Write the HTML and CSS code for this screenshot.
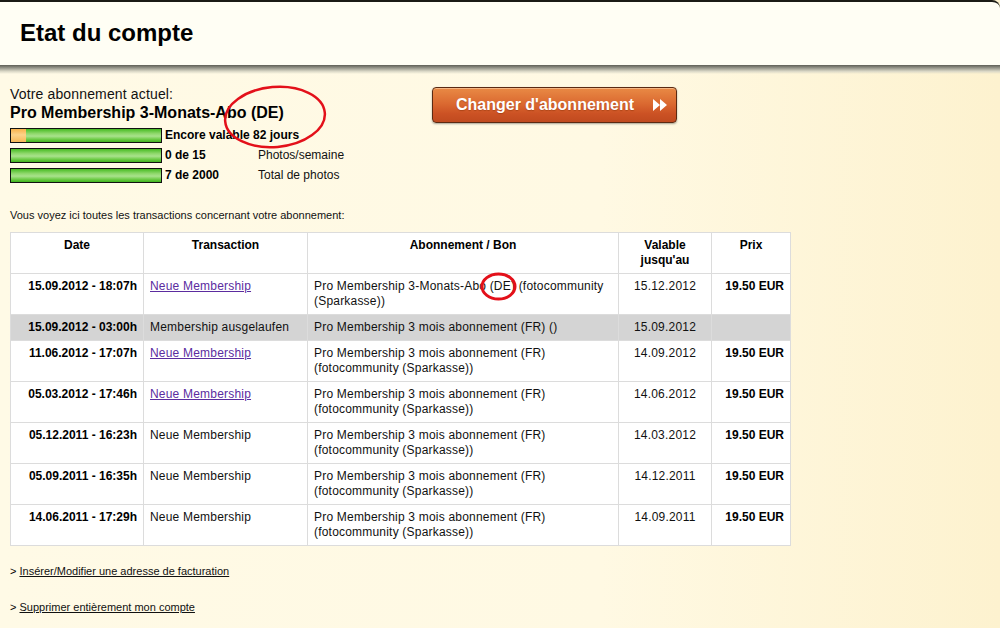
FILE: index.html
```html
<!DOCTYPE html>
<html lang="fr">
<head>
<meta charset="utf-8">
<title>Etat du compte</title>
<link rel="stylesheet" href="styles.css">
</head>
<body>
<div class="page">
  <header class="header"><h1>Etat du compte</h1></header>
  <div class="header-shadow"></div>

  <main class="content">
    <section class="top">
      <div class="summary">
        <div class="current-label">Votre abonnement actuel:</div>
        <div class="current-name">Pro Membership 3-Monats-Abo (DE)</div>
        <div class="meter-row">
          <div class="bar"><div class="bar-used" style="width:15px"></div></div>
          <span class="meter-value">Encore valable 82 jours</span>
        </div>
        <div class="meter-row">
          <div class="bar"></div>
          <span class="meter-value">0 de 15</span>
          <span class="meter-label">Photos/semaine</span>
        </div>
        <div class="meter-row">
          <div class="bar"></div>
          <span class="meter-value">7 de 2000</span>
          <span class="meter-label">Total de photos</span>
        </div>
      </div>
      <a class="change-btn" href="#">
        <span>Changer d'abonnement</span>
        <svg class="ff" width="14" height="12" viewBox="0 0 14 12"><path d="M0 0 L7 6 L0 12 Z M7 0 L14 6 L7 12 Z" fill="#fff"/></svg>
      </a>
    </section>

    <p class="intro">Vous voyez ici toutes les transactions concernant votre abonnement:</p>

    <table class="tx">
      <colgroup>
        <col class="c-date"><col class="c-type"><col class="c-sub"><col class="c-valid"><col class="c-price">
      </colgroup>
      <thead>
        <tr><th>Date</th><th>Transaction</th><th>Abonnement / Bon</th><th>Valable jusqu'au</th><th>Prix</th></tr>
      </thead>
      <tbody>
        <tr><td class="d">15.09.2012 - 18:07h</td><td><a href="#">Neue Membership</a></td><td>Pro Membership 3-Monats-Abo (DE) (fotocommunity (Sparkasse))</td><td class="v">15.12.2012</td><td class="p">19.50 EUR</td></tr>
        <tr class="expired"><td class="d">15.09.2012 - 03:00h</td><td>Membership ausgelaufen</td><td>Pro Membership 3 mois abonnement (FR) ()</td><td class="v">15.09.2012</td><td class="p"></td></tr>
        <tr><td class="d">11.06.2012 - 17:07h</td><td><a href="#">Neue Membership</a></td><td>Pro Membership 3 mois abonnement (FR) (fotocommunity (Sparkasse))</td><td class="v">14.09.2012</td><td class="p">19.50 EUR</td></tr>
        <tr><td class="d">05.03.2012 - 17:46h</td><td><a href="#">Neue Membership</a></td><td>Pro Membership 3 mois abonnement (FR) (fotocommunity (Sparkasse))</td><td class="v">14.06.2012</td><td class="p">19.50 EUR</td></tr>
        <tr><td class="d">05.12.2011 - 16:23h</td><td>Neue Membership</td><td>Pro Membership 3 mois abonnement (FR) (fotocommunity (Sparkasse))</td><td class="v">14.03.2012</td><td class="p">19.50 EUR</td></tr>
        <tr><td class="d">05.09.2011 - 16:35h</td><td>Neue Membership</td><td>Pro Membership 3 mois abonnement (FR) (fotocommunity (Sparkasse))</td><td class="v">14.12.2011</td><td class="p">19.50 EUR</td></tr>
        <tr><td class="d">14.06.2011 - 17:29h</td><td>Neue Membership</td><td>Pro Membership 3 mois abonnement (FR) (fotocommunity (Sparkasse))</td><td class="v">14.09.2011</td><td class="p">19.50 EUR</td></tr>
      </tbody>
    </table>

    <ul class="actions">
      <li>&gt; <a href="#">Insérer/Modifier une adresse de facturation</a></li>
      <li>&gt; <a href="#">Supprimer entièrement mon compte</a></li>
    </ul>
  </main>

  <svg class="annot" width="1000" height="628" viewBox="0 0 1000 628">
    <ellipse cx="275" cy="117" rx="50" ry="30" transform="rotate(-5 275 117)" fill="none" stroke="#e3101a" stroke-width="2.5"/>
    <ellipse cx="498.5" cy="286.5" rx="16.5" ry="12.5" fill="none" stroke="#e3101a" stroke-width="3"/>
  </svg>
</div>
</body>
</html>
```

FILE: styles.css
```css
html, body {
  margin: 0;
  padding: 0;
}
body {
  font-family: "Liberation Sans", Arial, sans-serif;
  color: #000;
  background: linear-gradient(to right, #fffae6 0%, #fff9e3 60%, #fdf2cf 100%);
  min-height: 628px;
}
.page {
  position: relative;
  min-height: 628px;
}
.header {
  height: 63px;
  border-top: 2px solid #1b1b15;
  border-top-right-radius: 8px;
  background: #fffef4;
  display: flex;
  align-items: center;
}
.header h1 {
  margin: 0 0 0 20px;
  font-size: 24px;
  font-weight: bold;
  line-height: 28px;
  padding-bottom: 1px;
}
.header-shadow {
  height: 9px;
  background: linear-gradient(to bottom, #5e5e56 0%, #9a9a8e 35%, #d9d7c6 70%, rgba(255,250,230,0) 100%);
}
.content {
  padding: 0 10px;
}
.top {
  display: flex;
  align-items: flex-start;
  padding-top: 11px;
}
.summary {
  width: 422px;
}
.current-label {
  font-size: 14px;
  letter-spacing: 0.15px;
  line-height: 18px;
  color: #111;
}
.current-name {
  font-size: 16px;
  font-weight: bold;
  line-height: 19px;
  margin-bottom: 3px;
}
.meter-row {
  display: flex;
  align-items: center;
  height: 20px;
  font-size: 12px;
}
.bar {
  width: 150px;
  height: 13px;
  border: 1px solid #111;
  background: linear-gradient(to bottom, #46bb22 0%, #8fd86c 35%, #a9e28c 55%, #6ccb45 80%, #3fb51d 100%);
  margin-right: 3px;
  flex: none;
  display: flex;
}
.bar-used {
  height: 100%;
  background: linear-gradient(to bottom, #f9b24a 0%, #fcd38a 45%, #f7b856 100%);
}
.meter-value {
  font-weight: bold;
  min-width: 93px;
}
.meter-label {
  color: #111;
}
.change-btn {
  margin-top: 2px;
  width: 243px;
  height: 34px;
  box-sizing: content-box;
  border: 1px solid #5b2a12;
  border-radius: 4px;
  background: linear-gradient(to bottom, #e98a45 0%, #db6a31 45%, #cc5224 75%, #c04a1f 100%);
  box-shadow: 0 1px 2px rgba(0,0,0,0.35), inset 0 1px 0 rgba(255,210,170,0.6);
  color: #fff;
  text-decoration: none;
  font-size: 16px;
  font-weight: bold;
  display: flex;
  align-items: center;
  padding: 0;
}
.change-btn span {
  margin-left: 23px;
  text-shadow: 0 1px 1px rgba(120,40,0,0.4);
}
.change-btn .ff {
  margin-left: auto;
  margin-right: 9px;
}
.intro {
  font-size: 11px;
  margin: 24px 0 10px;
  line-height: 13px;
  color: #111;
}
.tx {
  width: 780px;
  border-collapse: collapse;
  background: #fff;
  border: 1px solid #dcdcdc;
  font-size: 12px;
  line-height: 15px;
  table-layout: fixed;
}
.c-date { width: 133px; }
.c-type { width: 164px; }
.c-sub { width: 311px; }
.c-valid { width: 93px; }
.c-price { width: 79px; }
.tx th, .tx td {
  border: 1px solid #dcdcdc;
  padding: 5px 6px;
  vertical-align: top;
  text-align: left;
  color: #111;
  letter-spacing: 0.2px;
}
.tx th {
  text-align: center;
  font-weight: bold;
  color: #000;
  padding-left: 12px;
  padding-right: 12px;
  letter-spacing: 0;
}
.tx td.d {
  text-align: right;
  font-weight: bold;
  color: #000;
  letter-spacing: 0;
}
.tx td.v {
  text-align: center;
}
.tx td.p {
  text-align: right;
  font-weight: bold;
  color: #000;
  letter-spacing: 0;
}
.tx tr.expired td {
  background: #d4d4d4;
}
.tx a {
  color: #5b2c9f;
}
.actions {
  list-style: none;
  margin: 19px 0 0;
  padding: 0;
  font-size: 11px;
  line-height: 13px;
}
.actions li {
  margin-bottom: 23px;
}
.actions a {
  color: #111;
}
.annot {
  position: absolute;
  left: 0;
  top: 0;
  pointer-events: none;
}
```
